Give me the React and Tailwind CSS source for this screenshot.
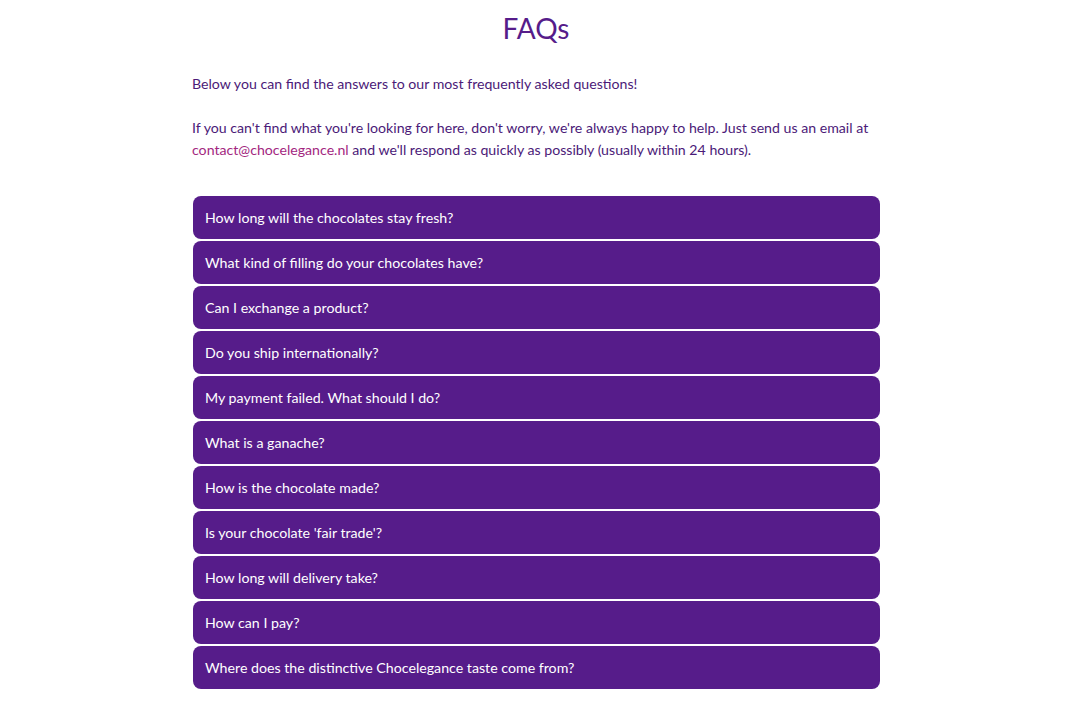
import React from "react";

const questions = [
  "How long will the chocolates stay fresh?",
  "What kind of filling do your chocolates have?",
  "Can I exchange a product?",
  "Do you ship internationally?",
  "My payment failed. What should I do?",
  "What is a ganache?",
  "How is the chocolate made?",
  "Is your chocolate 'fair trade'?",
  "How long will delivery take?",
  "How can I pay?",
  "Where does the distinctive Chocelegance taste come from?",
];

export default function App() {
  return (
    <div className="min-h-[712px] bg-white flex justify-center pr-[5px]" style={{ fontFamily: "Lato, 'Open Sans', sans-serif" }}>
      <div className="w-[688px]">
        <h1 className="text-center text-[28px] leading-[36px] pt-[10px] text-[#561c8a]">FAQs</h1>
        <div className="mt-[27px] text-[14.15px] leading-[22px] text-[#4b1a78]">
          <p>Below you can find the answers to our most frequently asked questions!</p>
          <p className="mt-[22px]">
            If you can't find what you're looking for here, don't worry, we're always happy to help. Just send us an email at{" "}
            <a className="text-[#a3277f]">contact@chocelegance.nl</a> and we'll respond as quickly as possibly (usually within 24 hours).
          </p>
        </div>
        <div className="mt-[35px] flex flex-col gap-[2px] pl-[1px]">
          {questions.map((q) => (
            <div key={q} className="h-[43px] rounded-[8px] bg-[#561c8a] text-white text-[14.2px] flex items-center px-[12px]">
              {q}
            </div>
          ))}
        </div>
      </div>
    </div>
  );
}
